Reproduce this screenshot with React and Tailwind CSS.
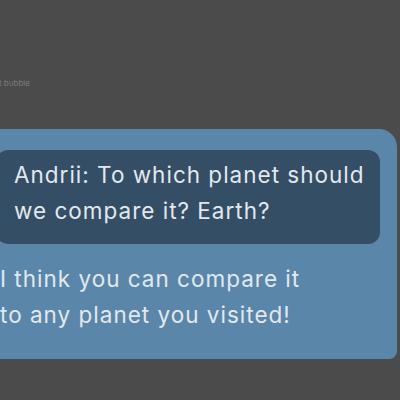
export default function App() {
  return (
    <div
      className="w-[400px] h-[400px] overflow-hidden bg-[#4b4b4b] relative"
      style={{ fontFamily: 'Inter, "Noto Sans", sans-serif' }}
    >
      <div className="pt-[78px] text-[8px] leading-[10px] text-[#7a7a7a] -ml-[1px]">
        t bubble
      </div>
      <div className="mt-[41px] -ml-[20px] w-[417px] h-[230px] bg-[#5a86a9] rounded-tr-[18px] rounded-br-[8px] rounded-l-[18px] pt-[21px] pl-[16px] pr-[17px]">
        <div className="bg-[#344e65] rounded-[12px] pl-[18px] pr-[6px] pt-[7px] pb-[15px] text-[#e2e9ee] text-[22.5px] leading-[36px] tracking-[1px]">
          Andrii: To which planet should we compare it? Earth?
        </div>
        <div className="pl-[4px] pt-[17px] text-[#e2e9ee] text-[22.5px] leading-[36px] tracking-[1px] w-[320px]">
          I think you can compare it to any planet you visited!
        </div>
      </div>
    </div>
  );
}
